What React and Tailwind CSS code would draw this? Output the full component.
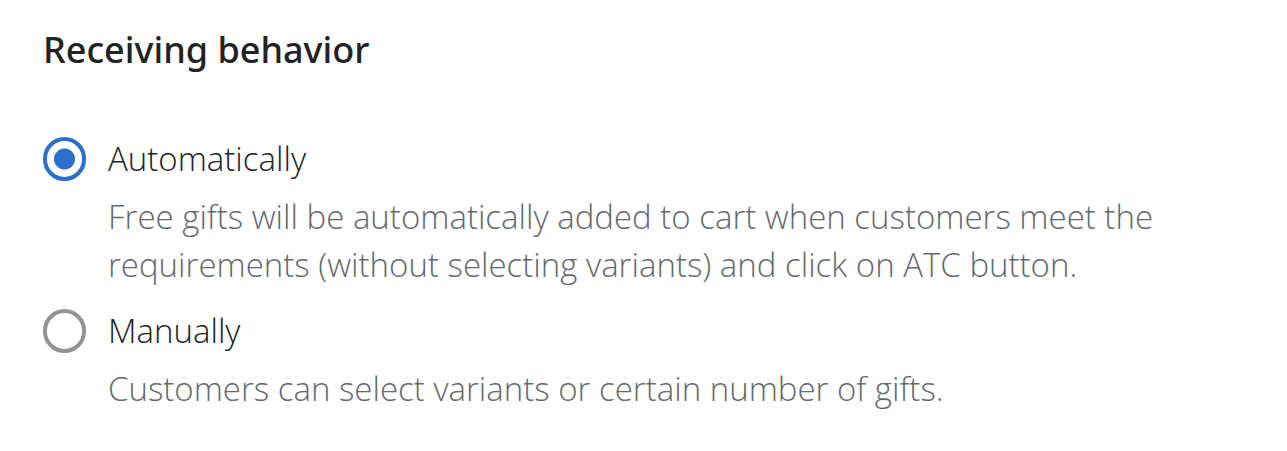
import React, { useState } from "react";

const behaviors = [
  {
    value: "automatically",
    label: "Automatically",
    description:
      "Free gifts will be automatically added to cart when customers meet the requirements (without selecting variants) and click on ATC button.",
  },
  {
    value: "manually",
    label: "Manually",
    description: "Customers can select variants or certain number of gifts.",
  },
];

function RadioOption({ option, checked, onChange }) {
  const id = `behavior-${option.value}`;

  return (
    <div className="flex items-start gap-[22px]">
      <input
        type="radio"
        id={id}
        name="receivingBehavior"
        value={option.value}
        checked={checked}
        onChange={onChange}
        aria-describedby={`${id}-help`}
        className="mt-1 h-11 w-[43px] shrink-0 cursor-pointer appearance-none rounded-full border-4 border-[#919395] bg-white checked:border-[#2c6ecb] checked:bg-[radial-gradient(circle,#2c6ecb_10px,transparent_11px)]"
      />
      <div>
        <label htmlFor={id} className="block cursor-pointer py-1 leading-[44px] text-[#202223]">
          {option.label}
        </label>
        <p id={`${id}-help`} className="mt-2 leading-[48px] text-[#65696d]">
          {option.description}
        </p>
      </div>
    </div>
  );
}

export default function App() {
  const [behavior, setBehavior] = useState("automatically");

  return (
    <main className="bg-white px-[43px] py-6 font-['Open_Sans',sans-serif] text-[33px] font-light">
      <fieldset>
        <legend className="font-['Noto_Sans',sans-serif] text-[36px] leading-[52px] font-medium text-[#202223]">
          Receiving behavior
        </legend>
        <div className="mt-[57px] flex max-w-[1160px] flex-col gap-4">
          {behaviors.map((option) => (
            <RadioOption
              key={option.value}
              option={option}
              checked={behavior === option.value}
              onChange={(e) => setBehavior(e.target.value)}
            />
          ))}
        </div>
      </fieldset>
    </main>
  );
}
